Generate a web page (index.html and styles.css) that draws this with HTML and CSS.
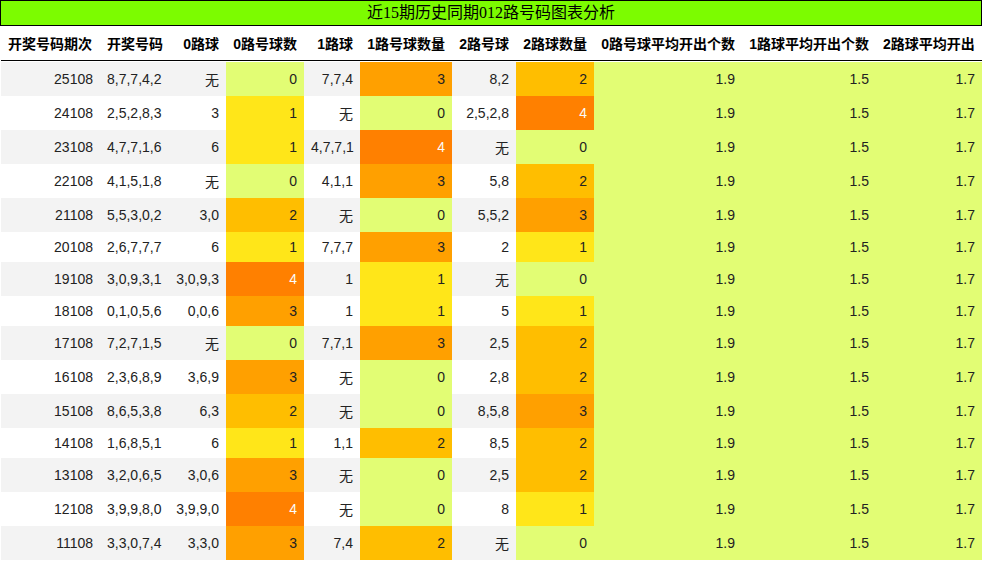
FILE: index.html
```html
<!DOCTYPE html>
<html lang="zh-CN">
<head>
<meta charset="utf-8">
<title>近15期历史同期012路号码图表分析</title>
<link rel="stylesheet" href="styles.css">
</head>
<body>
<div class="title">近15期历史同期012路号码图表分析</div>
<div class="wrap">
<table class="chart">
<colgroup>
<col class="w1"><col class="w2"><col class="w3"><col class="w4"><col class="w5"><col class="w6"><col class="w7"><col class="w8"><col class="w9"><col class="w10"><col class="w11">
</colgroup>
<thead>
<tr>
<th>开奖号码期次</th><th>开奖号码</th><th>0路球</th><th>0路号球数</th><th>1路球</th><th>1路号球数量</th><th>2路号球</th><th>2路球数量</th><th>0路号球平均开出个数</th><th>1路球平均开出个数</th><th><span class="clip">2路球平均开出个数</span></th>
</tr>
</thead>
<tbody>
<tr class="odd"><td>25108</td><td>8,7,7,4,2</td><td>无</td><td class="c0">0</td><td>7,7,4</td><td class="c3">3</td><td>8,2</td><td class="c2">2</td><td class="avg">1.9</td><td class="avg">1.5</td><td class="avg">1.7</td></tr>
<tr><td>24108</td><td>2,5,2,8,3</td><td>3</td><td class="c1">1</td><td>无</td><td class="c0">0</td><td>2,5,2,8</td><td class="c4">4</td><td class="avg">1.9</td><td class="avg">1.5</td><td class="avg">1.7</td></tr>
<tr class="odd"><td>23108</td><td>4,7,7,1,6</td><td>6</td><td class="c1">1</td><td>4,7,7,1</td><td class="c4">4</td><td>无</td><td class="c0">0</td><td class="avg">1.9</td><td class="avg">1.5</td><td class="avg">1.7</td></tr>
<tr><td>22108</td><td>4,1,5,1,8</td><td>无</td><td class="c0">0</td><td>4,1,1</td><td class="c3">3</td><td>5,8</td><td class="c2">2</td><td class="avg">1.9</td><td class="avg">1.5</td><td class="avg">1.7</td></tr>
<tr class="odd"><td>21108</td><td>5,5,3,0,2</td><td>3,0</td><td class="c2">2</td><td>无</td><td class="c0">0</td><td>5,5,2</td><td class="c3">3</td><td class="avg">1.9</td><td class="avg">1.5</td><td class="avg">1.7</td></tr>
<tr><td>20108</td><td>2,6,7,7,7</td><td>6</td><td class="c1">1</td><td>7,7,7</td><td class="c3">3</td><td>2</td><td class="c1">1</td><td class="avg">1.9</td><td class="avg">1.5</td><td class="avg">1.7</td></tr>
<tr class="odd"><td>19108</td><td>3,0,9,3,1</td><td>3,0,9,3</td><td class="c4">4</td><td>1</td><td class="c1">1</td><td>无</td><td class="c0">0</td><td class="avg">1.9</td><td class="avg">1.5</td><td class="avg">1.7</td></tr>
<tr><td>18108</td><td>0,1,0,5,6</td><td>0,0,6</td><td class="c3">3</td><td>1</td><td class="c1">1</td><td>5</td><td class="c1">1</td><td class="avg">1.9</td><td class="avg">1.5</td><td class="avg">1.7</td></tr>
<tr class="odd"><td>17108</td><td>7,2,7,1,5</td><td>无</td><td class="c0">0</td><td>7,7,1</td><td class="c3">3</td><td>2,5</td><td class="c2">2</td><td class="avg">1.9</td><td class="avg">1.5</td><td class="avg">1.7</td></tr>
<tr><td>16108</td><td>2,3,6,8,9</td><td>3,6,9</td><td class="c3">3</td><td>无</td><td class="c0">0</td><td>2,8</td><td class="c2">2</td><td class="avg">1.9</td><td class="avg">1.5</td><td class="avg">1.7</td></tr>
<tr class="odd"><td>15108</td><td>8,6,5,3,8</td><td>6,3</td><td class="c2">2</td><td>无</td><td class="c0">0</td><td>8,5,8</td><td class="c3">3</td><td class="avg">1.9</td><td class="avg">1.5</td><td class="avg">1.7</td></tr>
<tr><td>14108</td><td>1,6,8,5,1</td><td>6</td><td class="c1">1</td><td>1,1</td><td class="c2">2</td><td>8,5</td><td class="c2">2</td><td class="avg">1.9</td><td class="avg">1.5</td><td class="avg">1.7</td></tr>
<tr class="odd"><td>13108</td><td>3,2,0,6,5</td><td>3,0,6</td><td class="c3">3</td><td>无</td><td class="c0">0</td><td>2,5</td><td class="c2">2</td><td class="avg">1.9</td><td class="avg">1.5</td><td class="avg">1.7</td></tr>
<tr><td>12108</td><td>3,9,9,8,0</td><td>3,9,9,0</td><td class="c4">4</td><td>无</td><td class="c0">0</td><td>8</td><td class="c1">1</td><td class="avg">1.9</td><td class="avg">1.5</td><td class="avg">1.7</td></tr>
<tr class="odd"><td>11108</td><td>3,3,0,7,4</td><td>3,3,0</td><td class="c3">3</td><td>7,4</td><td class="c2">2</td><td>无</td><td class="c0">0</td><td class="avg">1.9</td><td class="avg">1.5</td><td class="avg">1.7</td></tr>
</tbody>
</table>
</div>
</body>
</html>
```
FILE: styles.css
```css
html, body {
  margin: 0;
  padding: 0;
  background: #fff;
}
body {
  width: 982px;
  overflow: hidden;
  font-family: "Liberation Sans", "Noto Sans CJK SC", sans-serif;
  font-size: 14px;
  color: #222;
}
.title {
  box-sizing: border-box;
  width: 982px;
  height: 26px;
  border: 1px solid #000;
  background: #7cfc00;
  color: #000;
  font-family: "Liberation Serif", "Noto Sans CJK SC", serif;
  font-size: 16px;
  line-height: 24px;
  text-align: center;
}
.wrap {
  width: 982px;
  overflow: hidden;
}
.chart {
  table-layout: fixed;
  width: 981px;
  border-collapse: separate;
  border-spacing: 0;
  margin-left: 1px;
  white-space: nowrap;
}
.w1 { width: 99px; }
.w2 { width: 68px; }
.w3 { width: 58px; }
.w4 { width: 78px; }
.w5 { width: 56px; }
.w6 { width: 92px; }
.w7 { width: 64px; }
.w8 { width: 78px; }
.w9 { width: 148px; }
.w10 { width: 134px; }
.w11 { width: 106px; }
.chart th {
  font-weight: bold;
  color: #000;
  padding: 7px 7px;
  text-align: right;
  background: #fff;
  border-bottom: 1px solid #000;
  overflow: hidden;
}
.chart th:first-child {
  text-align: left;
}
.chart .clip {
  display: block;
  overflow: hidden;
  text-align: left;
}
.chart td {
  padding: 7px 7px;
  text-align: right;
}
.chart tbody tr:first-child td {
  border-top: 1px solid #fff;
}
.chart tr.odd td {
  background: #f3f3f3;
}
.chart td.c0, .chart tr.odd td.c0 { background: #e2fd74; }
.chart td.c1, .chart tr.odd td.c1 { background: #ffe619; }
.chart td.c2, .chart tr.odd td.c2 { background: #ffbe00; }
.chart td.c3, .chart tr.odd td.c3 { background: #ffa000; }
.chart td.c4, .chart tr.odd td.c4 { background: #ff8000; color: #fafafa; }
.chart td.avg, .chart tr.odd td.avg { background: #e2fd74; }
```
